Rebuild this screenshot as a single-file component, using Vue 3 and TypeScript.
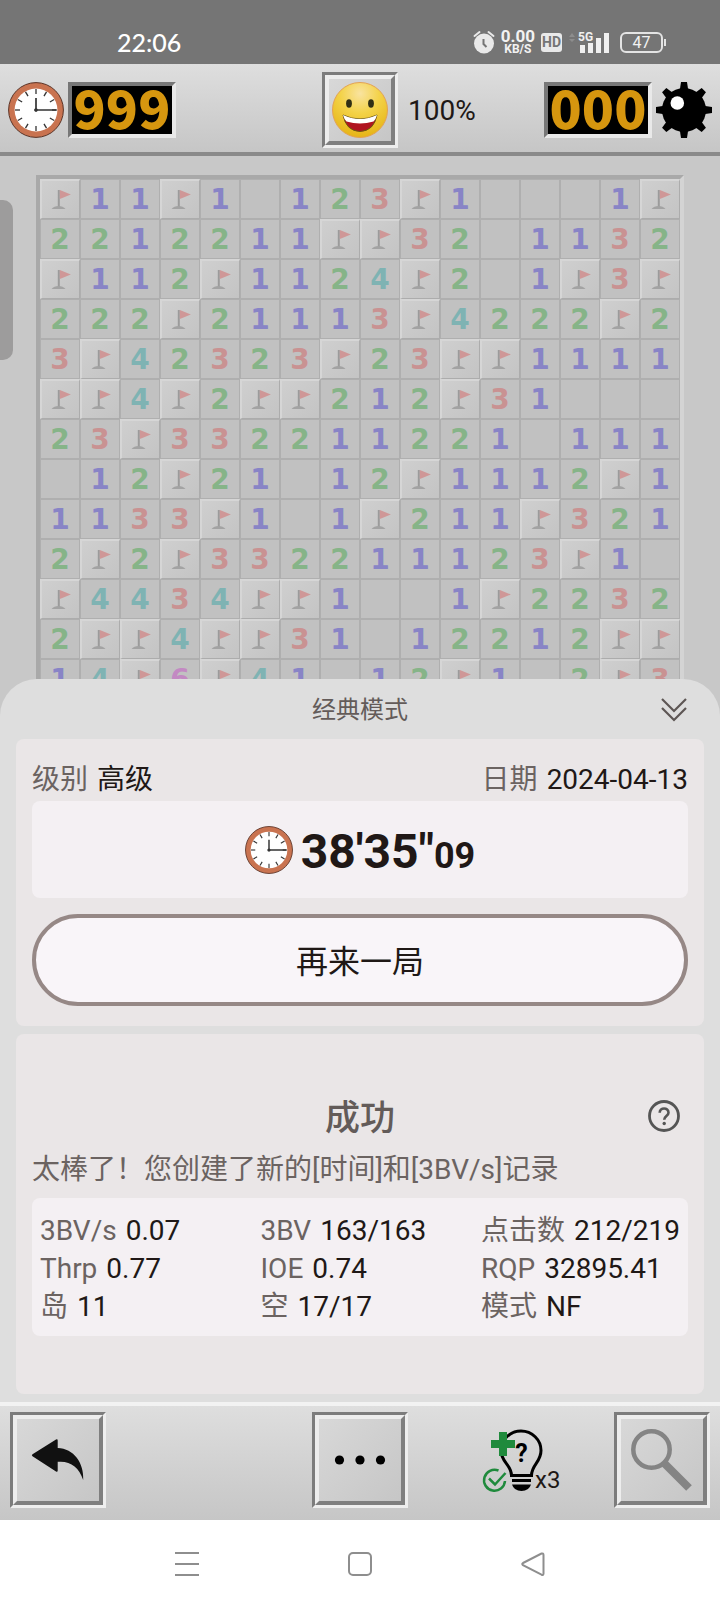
<script setup lang="ts">
interface Stat {
  label: string
  value: string
}

const rows: string[] = [
  'F11F1.123F1...1F',
  '2212211FF32.1132',
  'F112F1124F2.1F3F',
  '222F21113F4222F2',
  '3F42323F23FF1111',
  'FF4F2FF212F31...',
  '23F332211221.111',
  '.12F21.12F1112F1',
  '1133F1.1F211F321',
  '2F2F332211123F1.',
  'F4434FF1..1F2232',
  '2FF4FF31.12212FF',
  '14F6F41.12F1.2F3',
]

const cells: string[] = rows.join('').split('')

const stats: Stat[] = [
  { label: '3BV/s', value: '0.07' },
  { label: '3BV', value: '163/163' },
  { label: '点击数', value: '212/219' },
  { label: 'Thrp', value: '0.77' },
  { label: 'IOE', value: '0.74' },
  { label: 'RQP', value: '32895.41' },
  { label: '岛', value: '11' },
  { label: '空', value: '17/17' },
  { label: '模式', value: 'NF' },
]

const ticks: number[] = [0, 30, 60, 90, 120, 150, 180, 210, 240, 270, 300, 330]
const spikes: number[] = [0, 45, 90, 135, 180, 225, 270, 315]

function cellClass(cell: string): string {
  if (cell === 'F') return 'flagged'
  return cell === '.' ? 'open' : `open n${cell}`
}
</script>

<template>
  <div class="page">
    <svg class="defs" aria-hidden="true">
      <symbol id="clock" viewBox="0 0 56 56">
        <circle cx="28" cy="28" r="27.4" fill="#c97350" stroke="#5b3427" stroke-width="1" />
        <circle cx="28" cy="28" r="21.4" fill="#fff" />
        <path
          v-for="t in ticks"
          :key="t"
          d="M28 7v5"
          stroke="#333"
          stroke-width="1.3"
          :transform="`rotate(${t} 28 28)`"
        />
        <path d="M28 16v13.500M26.500 28H48" fill="none" stroke="#333" stroke-width="1.7" />
        <circle cx="28" cy="28" r="1.800" fill="#333" />
      </symbol>
      <symbol id="flag" viewBox="2 2 37 37">
        <path d="M18.800 11v17" stroke="#9b9b9b" stroke-width="2" />
        <path d="M19.800 11l11 4.500-11 4.500z" fill="#cf9797" />
        <path d="M11.500 30c3-4 11-4 14 0z" fill="#a3a3a3" />
      </symbol>
    </svg>

    <header class="status">
      <time class="now">22:06</time>
      <div class="tray">
        <svg class="alarm" viewBox="0 0 22 24" width="22" height="24">
          <circle cx="11" cy="13.500" r="10" fill="#e9e9e9" />
          <path d="M1.500 6l5-4M15.500 2l5 4" stroke="#e9e9e9" stroke-width="2" stroke-linecap="round" />
          <path d="M10.500 9v5l3 3" fill="none" stroke="#757575" stroke-width="2" />
        </svg>
        <span class="rate"><b>0.00</b><small>KB/S</small></span>
        <span class="hd">HD</span>
        <svg class="signal" viewBox="0 0 42 26" width="42" height="26">
          <path d="M1 8l3-4 3 4zM1 10l3 3 3-3z" fill="#8d8d8d" />
          <text x="10" y="12" class="g5">5G</text>
          <path d="M12 16h5v8h-5zM20 14h5v10h-5zM28 9h5v15h-5zM36 4h5v20h-5z" fill="#f0f0f0" />
        </svg>
        <span class="battery">47</span>
      </div>
    </header>

    <section class="toolbar">
      <div class="counter">
        <svg class="icon56"><use href="#clock" /></svg>
        <output class="led" aria-label="时间">999</output>
      </div>
      <button class="bevel face" aria-label="重新开始">
        <span class="inner">
          <svg viewBox="0 0 60 60" width="60" height="60">
            <defs>
              <radialGradient id="skin" cx="0.5" cy="0.2" r="0.8">
                <stop offset="0" stop-color="#f9e3a0" />
                <stop offset="0.45" stop-color="#f3d247" />
                <stop offset="1" stop-color="#e6b416" />
              </radialGradient>
            </defs>
            <circle cx="30" cy="30" r="27.500" fill="url(#skin)" stroke="#e3a255" stroke-width="1" />
            <ellipse cx="19" cy="23.500" rx="2.900" ry="4.200" fill="#302f14" />
            <ellipse cx="41" cy="23.500" rx="2.900" ry="4.200" fill="#302f14" />
            <path d="M13 35q17 8 34 0-3 16-17 16.500Q16 51 13 35z" fill="#b01420" stroke="#6a5a10" />
            <path d="M13 35q17 8 34 0-1 4-3.500 6.500-13.500 4-27 0Q14 39 13 35z" fill="#fff" />
          </svg>
        </span>
      </button>
      <div class="mines">
        <span class="percent">100%</span>
        <div class="counter">
          <output class="led" aria-label="剩余地雷">000</output>
          <svg class="icon56" viewBox="0 0 56 56">
            <circle cx="28" cy="28" r="22" />
            <path v-for="s in spikes" :key="s" d="M25 0h6l1.500 10h-9z" :transform="`rotate(${s} 28 28)`" />
            <circle cx="21.300" cy="21" r="6.800" fill="#fff" />
          </svg>
        </div>
      </div>
    </section>

    <main class="field">
      <div class="drawer"></div>
      <div class="board">
        <button v-for="(cell, i) in cells" :key="i" class="cell" :class="cellClass(cell)">
          <svg v-if="cell === 'F'" class="flag"><use href="#flag" /></svg>
          <template v-else-if="cell !== '.'">{{ cell }}</template>
        </button>
      </div>
    </main>

    <section class="sheet-wrap">
      <div class="sheet">
        <div class="sheet-head">
          <h1>经典模式</h1>
          <button class="plain" aria-label="收起">
            <svg viewBox="0 0 28 26" width="28" height="26">
              <path d="M2 2l12 12L26 2M2 11l12 12 12-12" fill="none" stroke="#5d5654" stroke-width="2.2" />
            </svg>
          </button>
        </div>

        <article class="card result">
          <div class="meta">
            <p><span>级别</span>高级</p>
            <p><span>日期</span>2024-04-13</p>
          </div>
          <div class="elapsed">
            <svg class="icon48"><use href="#clock" /></svg>
            <p>38'35"<small>09</small></p>
          </div>
          <button class="again">再来一局</button>
        </article>

        <article class="card summary">
          <div class="title">
            <h2>成功</h2>
            <button class="plain help" aria-label="帮助">
              <svg viewBox="0 0 32 32" width="32" height="32">
                <circle cx="16" cy="16" r="14.500" fill="none" stroke="#555" stroke-width="2.800" />
                <path d="M11.700 12.700c0-5.600 8.800-5.600 8.800 0 0 3.300-4.300 3.500-4.300 7" fill="none" stroke="#555" stroke-width="2.600" />
                <circle cx="16.200" cy="23.500" r="1.700" fill="#555" />
              </svg>
            </button>
          </div>
          <p class="message">太棒了！您创建了新的[时间]和[3BV/s]记录</p>
          <dl class="stats">
            <div v-for="s in stats" :key="s.label">
              <dt>{{ s.label }}</dt>
              <dd>{{ s.value }}</dd>
            </div>
          </dl>
        </article>
      </div>
    </section>

    <nav class="actions">
      <button class="bevel action" aria-label="返回">
        <span class="inner">
          <svg viewBox="7 7 82 82" width="82" height="82">
            <path d="M22.500 42.200L46 27.500q1.700-.8 1.700 1V36c16 .5 26.500 15 25.500 32C69 55 60 48.500 47.700 49.800V58.500q0 1.800-1.700 1L22.500 44.200q-1.300-1 0-2z" fill="#111" />
          </svg>
        </span>
      </button>
      <button class="bevel action" aria-label="更多">
        <span class="inner">
          <svg viewBox="7 7 82 82" width="82" height="82">
            <circle cx="27.500" cy="48" r="4.600" />
            <circle cx="48" cy="48" r="4.600" />
            <circle cx="68.500" cy="48" r="4.600" />
          </svg>
        </span>
      </button>
      <div class="end">
        <button class="plain hint" aria-label="提示 x3">
          <svg viewBox="0 0 82 68" width="82" height="68">
            <path
              d="M31.500 49.500c0-11-10.500-13-10.500-25a20 19.500 0 0 1 40 0c0 12-9.500 14-9.500 25z"
              fill="none"
              stroke="#000"
              stroke-width="3"
            />
            <path d="M32 54.500h19" stroke="#000" stroke-width="3" />
            <path d="M32 58.500h19q-2 6.500-9.500 6.500T32 58.500z" />
            <text x="41.500" y="36" class="ask">?</text>
            <path d="M19 6h8v8h8v8h-8v8h-8v-8h-8v-8h8z" fill="#1f8a3c" />
            <path d="M18.500 44.500A10.500 10.500 0 1 0 25 55" fill="none" stroke="#1f8a3c" stroke-width="2.500" />
            <path d="M9 52.500l6 6L25.500 47" fill="none" stroke="#1f8a3c" stroke-width="2.500" />
            <text x="55" y="61.500" class="times">x3</text>
          </svg>
        </button>
        <button class="bevel action" aria-label="缩放">
          <span class="inner">
            <svg viewBox="7 7 82 82" width="82" height="82">
              <circle cx="37.500" cy="37.500" r="18.200" fill="none" stroke="#848484" stroke-width="4.500" />
              <path d="M50 51l25 25" stroke="#848484" stroke-width="8" />
            </svg>
          </span>
        </button>
      </div>
    </nav>

    <footer class="system">
      <div class="keys">
        <button class="plain" aria-label="最近任务">
          <svg viewBox="0 0 24 24" width="24" height="24"><path d="M0 1h24M0 12h24M0 23h24" class="line" /></svg>
        </button>
        <button class="plain" aria-label="主屏幕">
          <svg viewBox="0 0 24 24" width="24" height="24"><rect x="1" y="1" width="22" height="22" rx="4" class="line" /></svg>
        </button>
        <button class="plain" aria-label="后退">
          <svg viewBox="0 0 24 24" width="24" height="24">
            <path d="M2 11L20.500 1.500q2-.5 2 1.500v18.500q0 2-2 1.200L2 13.200q-1.500-1.200 0-2.200z" class="line" />
          </svg>
        </button>
      </div>
    </footer>
  </div>
</template>

<style>
body {
  margin: 0;
}
</style>

<style scoped>
* {
  box-sizing: border-box;
}

.page {
  display: flex;
  flex-direction: column;
  height: 100vh;
  background: #fff;
  color: #201816;
  font-family: Roboto, "Noto Sans CJK SC", sans-serif;
  font-size: 28px;
}

h1,
h2,
p,
dl,
dd {
  margin: 0;
}

svg {
  display: block;
}

button {
  padding: 0;
  border: 0;
  background: none;
  color: inherit;
  font: inherit;
}

.defs {
  position: absolute;
  width: 0;
  height: 0;
}

.status {
  display: flex;
  flex: none;
  justify-content: space-between;
  align-items: center;
  height: 64px;
  padding: 20px 54px 0 117px;
  background: #757575;
  color: #fff;
}

.now {
  font: 500 25px/28px Lato, sans-serif;
}

.tray {
  display: flex;
  align-items: center;
  gap: 6px;
}

.rate {
  display: flex;
  flex-direction: column;
  align-items: center;
  color: #f2f2f2;
  font-family: Roboto, sans-serif;
}

.rate b {
  font-size: 17px;
  font-weight: 700;
  line-height: 14px;
}

.rate small {
  font-size: 12px;
  font-weight: 700;
  line-height: 12px;
}

.hd {
  width: 21px;
  height: 19px;
  border-radius: 3px;
  background: #e9e9e9;
  color: #757575;
  font: 700 14px/19px Roboto, sans-serif;
  text-align: center;
}

.g5 {
  fill: #f0f0f0;
  font: 700 12px Roboto, sans-serif;
}

.battery {
  position: relative;
  width: 43px;
  height: 21px;
  margin: 0 3px 0 4px;
  border: 2px solid #e4e4e4;
  border-radius: 6px;
  color: #f2f2f2;
  font: 400 16px/17px Roboto, sans-serif;
  text-align: center;
}

.battery::after {
  position: absolute;
  top: 5px;
  right: -5px;
  width: 2px;
  height: 7px;
  background: #e4e4e4;
  content: "";
}

.toolbar {
  display: grid;
  flex: none;
  grid-template-columns: 1fr auto 1fr;
  align-items: center;
  height: 92px;
  padding: 4px 8px 0;
  border-bottom: 4px solid #8a8a8a;
  background: linear-gradient(#dedede, #c6c6c6);
}

.counter {
  display: flex;
  align-items: center;
  gap: 4px;
}

.icon56 {
  width: 56px;
  height: 56px;
}

.icon48 {
  width: 48px;
  height: 48px;
}

.led {
  width: 108px;
  height: 56px;
  border: 4px solid;
  border-color: #777 #e9e9e9 #e9e9e9 #777;
  background: #000;
  color: #d6960f;
  font: 900 53px/40px "Noto Sans CJK SC", sans-serif;
  text-align: center;
}

.bevel {
  border: 3px solid;
  border-color: #7c7c7c #eee #eee #7c7c7c;
}

.inner {
  display: flex;
  justify-content: center;
  align-items: center;
  width: 100%;
  height: 100%;
  border: 4px solid;
  border-color: #ededed #7f7f7f #7f7f7f #ededed;
  background: linear-gradient(135deg, #d8d8d8, #c6c6c6);
}

.face {
  width: 76px;
  height: 76px;
}

.mines {
  display: flex;
  justify-content: space-between;
  align-items: center;
  padding-left: 10px;
}

.field {
  position: relative;
  flex: 1 1 0;
  min-height: 0;
  padding: 19px 36px 0;
  overflow: hidden;
  background: #c8c8c8;
}

.drawer {
  position: absolute;
  top: 44px;
  left: 0;
  width: 13px;
  height: 160px;
  border-radius: 0 10px 10px 0;
  background: #9d9c9c;
}

.board {
  display: grid;
  grid-template-columns: repeat(16, 1fr);
  border: 4px solid;
  border-color: #a9a9a9 #d4d4d4 #d4d4d4 #a9a9a9;
}

.cell {
  display: flex;
  justify-content: center;
  align-items: center;
  aspect-ratio: 1;
  padding-top: 2px;
  border: 1px solid #afafaf;
  background: #c1c1c1;
  font: 700 28px/36px "DejaVu Sans", sans-serif;
}

.flagged {
  padding: 0;
  border-width: 2px 1px 1px 2px;
  border-color: #d6d6d6 #acacac #acacac #d6d6d6;
  background: linear-gradient(135deg, #cfcfcf, #c4c4c4);
}

.flag {
  width: 100%;
  height: 100%;
}

.n1 {
  color: #8884c6;
}

.n2 {
  color: #86b488;
}

.n3 {
  color: #c99292;
}

.n4 {
  color: #7fb3b3;
}

.n6 {
  color: #c389c3;
}

.sheet-wrap {
  flex: none;
  background: #c8c8c8;
}

.sheet {
  display: flex;
  flex-direction: column;
  gap: 8px;
  padding: 0 16px 8px;
  border-radius: 37px 37px 0 0;
  background: #dedede;
}

.sheet-head {
  display: grid;
  grid-template-columns: 1fr auto 1fr;
  align-items: center;
  height: 52px;
  padding: 10px 16px 0;
}

.sheet-head h1 {
  grid-column: 2;
  color: #635b59;
  font-size: 24px;
  font-weight: 400;
  line-height: 32px;
}

.sheet-head button {
  justify-self: end;
}

.card {
  padding: 22px 16px 20px;
  border-radius: 8px;
  background: #eae6e7;
}

.meta {
  display: flex;
  justify-content: space-between;
  margin-bottom: 2px;
  line-height: 38px;
}

.meta p {
  display: flex;
  gap: 9px;
}

.meta span,
dt {
  color: #6b6361;
}

.elapsed {
  display: flex;
  justify-content: center;
  align-items: center;
  gap: 8px;
  height: 97px;
  margin: 0 0 16px;
  border-radius: 8px;
  background: #f4f0f3;
  font-size: 48px;
  font-weight: 700;
  line-height: 56px;
}

.elapsed p {
  padding-top: 8px;
}

.elapsed small {
  font-size: 36px;
}

.again {
  display: block;
  width: 100%;
  height: 92px;
  padding-bottom: 2px;
  border: 4px solid #968886;
  border-radius: 46px;
  background: #f9f5f9;
  font-size: 32px;
}

.summary {
  padding: 58px 16px;
}

.title {
  display: grid;
  grid-template-columns: 1fr auto 1fr;
  align-items: center;
  height: 50px;
  padding: 0 8px;
}

.title h2 {
  grid-column: 2;
  padding-top: 4px;
  color: #635b59;
  font-size: 35px;
  font-weight: 500;
  line-height: 46px;
}

.help {
  justify-self: end;
  padding-bottom: 2px;
}

.message {
  margin: 2px 0;
  color: #6b6361;
  line-height: 52px;
}

.stats {
  display: grid;
  grid-template-columns: 1fr 1fr auto;
  padding: 14px 8px 10px;
  border-radius: 8px;
  background: #f4f0f3;
  line-height: 38px;
}

.stats div {
  display: flex;
  gap: 9px;
  height: 38px;
}

.actions {
  display: grid;
  flex: none;
  grid-template-columns: 1fr auto 1fr;
  padding: 6px 10px 12px;
  border-top: 4px solid #f2f2f2;
  background: linear-gradient(#dedede, #c6c6c6);
}

.action {
  width: 96px;
  height: 96px;
}

.end {
  display: flex;
  justify-content: space-between;
}

.hint {
  display: flex;
  flex: 1;
  justify-content: center;
  align-items: center;
  padding-left: 20px;
}

.ask {
  font: 700 25px Roboto, sans-serif;
  text-anchor: middle;
}

.times {
  fill: #201816;
  font: 400 24px Roboto, sans-serif;
}

.system {
  flex: none;
  height: 88px;
  background: #fff;
}

.keys {
  display: grid;
  grid-template-columns: repeat(3, 1fr);
  align-items: center;
  justify-items: center;
  width: 72%;
  height: 100%;
  margin: 0 auto;
}

.line {
  fill: none;
  stroke: #8e8e8e;
  stroke-width: 2;
}
</style>
